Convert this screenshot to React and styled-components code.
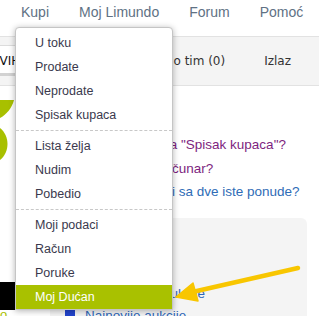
import React from "react";
import styled, { createGlobalStyle } from "styled-components";

const Global = createGlobalStyle`
  html, body { margin: 0; padding: 0; background: #fff; }
  body {
    width: 319px; height: 316px; overflow: hidden;
    font-family: "Liberation Sans", Arial, sans-serif;
  }
  #root { width: 319px; height: 316px; }
`;

const Page = styled.div`
  position: relative;
  width: 319px;
  height: 316px;
  overflow: hidden;
  background: #fff;
`;

const Nav = styled.nav`
  display: flex;
  height: 36px;
  padding-left: 6px;
  box-sizing: border-box;
`;

const NavItem = styled.a`
  padding: 0 15px;
  line-height: 24px;
  font-size: 14px;
  color: #607184;
  text-decoration: none;
  white-space: nowrap;
`;

const Bar = styled.div`
  display: flex;
  align-items: flex-start;
  height: 50px;
  box-sizing: border-box;
  border-top: 1px solid #e2e2e2;
  border-bottom: 1px solid #e2e2e2;
  background: #f4f4f4;
  font-family: "DejaVu Sans", Verdana, sans-serif;
  font-size: 12px;
  color: #333;
`;

const Tab = styled.div`
  margin: 8px 0 0 -19px;
  height: 31px;
  box-sizing: border-box;
  padding: 3px 10px 0;
  line-height: 24px;
  background: #fff;
  border: 1px solid #dcdcdc;
  border-bottom: 3px solid #d2d2d2;
  color: #111;
  white-space: nowrap;
`;

const BarLinks = styled.div`
  margin-left: auto;
  display: flex;
  gap: 39px;
  padding: 14px 28px 0 0;
  line-height: 20px;
  white-space: nowrap;
`;

const Main = styled.div`
  display: grid;
  grid-template-columns: 115px 1fr;
  height: 132px;
`;

const LogoCell = styled.div`
  padding-top: 12px;
`;

const Faq = styled.ul`
  list-style: none;
  margin: 0;
  padding: 47px 0 0;
  font-size: 13.5px;
  line-height: 23.5px;
  white-space: nowrap;
`;

const FaqLink = styled.li`
  color: ${(p) => (p.$visited ? "#7e1f80" : "#2f6cb6")};
`;

const Bottom = styled.div`
  display: flex;
  height: 98px;
`;

const LeftStrip = styled.div`
  width: 15px;
  padding-top: 64px;
  overflow: hidden;
`;

const BlackBlock = styled.div`
  height: 28px;
  background: #000;
`;

const GreenText = styled.div`
  color: #a8c000;
  font-size: 13px;
  line-height: 14px;
  margin-top: -2px;
`;

const Box = styled.div`
  margin-left: 35px;
  width: 257px;
  background: #f4f4f4;
  border-top-right-radius: 6px;
  padding: 64px 0 0 15px;
  box-sizing: border-box;
`;

const BoxRow = styled.div`
  display: flex;
  align-items: center;
  gap: 10px;
  height: 22px;
  font-size: 13.5px;
  color: #2f67b8;
  white-space: nowrap;
`;

const Bullet = styled.span`
  width: 10px;
  height: 10px;
  background: #2244cc;
  flex: none;
`;

const Menu = styled.div`
  position: absolute;
  left: 15px;
  top: 27px;
  width: 158px;
  box-sizing: border-box;
  padding-top: 3px;
  background: #fff;
  border: 1px solid #c5c5c5;
  border-radius: 4px 4px 0 0;
  box-shadow: 0 1px 6px rgba(0, 0, 0, 0.3);
`;

const MenuItem = styled.div`
  height: 24px;
  line-height: 24px;
  padding-left: 19px;
  font-size: 12.5px;
  color: ${(p) => (p.$active ? "#fff" : "#3a394d")};
  background: ${(p) => (p.$active ? "#a9c100" : "transparent")};
  white-space: nowrap;
`;

const Separator = styled.div`
  height: 0;
  border-top: 1px dashed #c8c8c8;
  margin: 3px 0;
`;

const ArrowLayer = styled.svg`
  position: absolute;
  left: 0;
  top: 0;
  pointer-events: none;
`;

const groups = [
  ["U toku", "Prodate", "Neprodate", "Spisak kupaca"],
  ["Lista želja", "Nudim", "Pobedio"],
  ["Moji podaci", "Račun", "Poruke", "Moj Dućan"],
];

export default function App() {
  return (
    <Page>
      <Global />
      <Nav>
        <NavItem>Kupi</NavItem>
        <NavItem>Moj Limundo</NavItem>
        <NavItem>Forum</NavItem>
        <NavItem>Pomoć</NavItem>
      </Nav>
      <Bar>
        <Tab>SVIH</Tab>
        <BarLinks>
          <span>Limundo tim (0)</span>
          <span>Izlaz</span>
        </BarLinks>
      </Bar>
      <Main>
        <LogoCell>
          <svg width="15" height="64" viewBox="0 0 15 64">
            <path d="M0 2 L14 2 C12 10 6 17 0 20 Z" fill="#a8c000" />
            <path d="M0 30 C10 38 10 54 0 62 Z" fill="#a8c000" />
          </svg>
        </LogoCell>
        <Faq>
          <FaqLink $visited>Šta je lista "Spisak kupaca"?</FaqLink>
          <FaqLink $visited>Deljeni računar?</FaqLink>
          <FaqLink>Kupujem i sa dve iste ponude?</FaqLink>
        </Faq>
      </Main>
      <Bottom>
        <LeftStrip>
          <BlackBlock />
          <GreenText>o</GreenText>
        </LeftStrip>
        <Box>
          <BoxRow>
            <Bullet />
            Najgledanije aukcije
          </BoxRow>
          <BoxRow>
            <Bullet />
            Najnovije aukcije
          </BoxRow>
        </Box>
      </Bottom>

      <Menu>
        {groups.map((g, gi) => (
          <React.Fragment key={gi}>
            {gi > 0 && <Separator />}
            {g.map((label) => (
              <MenuItem key={label} $active={label === "Moj Dućan"}>
                {label}
              </MenuItem>
            ))}
          </React.Fragment>
        ))}
      </Menu>

      <ArrowLayer width="319" height="316" viewBox="0 0 319 316">
        <line x1="298" y1="268" x2="188" y2="293" stroke="#f8c600" strokeWidth="4.5" strokeLinecap="round" />
        <polygon points="176,297 193,283 198,301" fill="#f8c600" stroke="#f8c600" strokeWidth="1.5" strokeLinejoin="round" />
      </ArrowLayer>
    </Page>
  );
}
